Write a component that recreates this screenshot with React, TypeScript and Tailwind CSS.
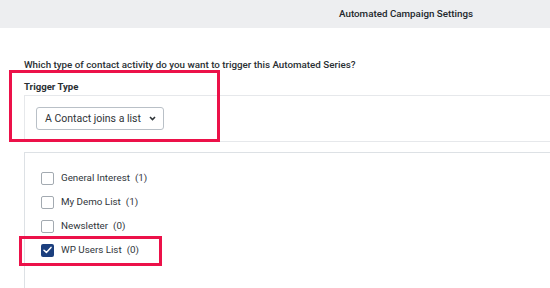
import { useState } from 'react';

interface ListItem {
  id: number;
  nome: string;
  total: number;
}

const listas: ListItem[] = [
  { id: 1, nome: 'General Interest', total: 1 },
  { id: 2, nome: 'My Demo List', total: 1 },
  { id: 3, nome: 'Newsletter', total: 0 },
  { id: 4, nome: 'WP Users List', total: 0 },
];

function Checkbox({ checked }: { checked: boolean }) {
  if (checked) {
    return (
      <span className="w-[13px] h-[13px] rounded-[2px] bg-[#1c3f7e] flex items-center justify-center shrink-0">
        <svg width="9" height="8" viewBox="0 0 9 8" fill="none">
          <path d="M1 4.2 L3.4 6.4 L8 1.4" stroke="white" strokeWidth="1.5" strokeLinecap="round" strokeLinejoin="round" />
        </svg>
      </span>
    );
  }
  return <span className="w-[13px] h-[13px] rounded-[2px] border-[1.5px] border-[#a3aab1] bg-white shrink-0" />;
}

export default function App() {
  const [selecionados] = useState<number[]>([4]);

  return (
    <div className="relative w-[550px] h-[288px] overflow-hidden bg-white text-[#333a40] font-['Roboto',sans-serif]">
      {/* cabeçalho */}
      <div className="h-[28px] bg-[#edeef0] flex items-center pl-[339px]">
        <span className="text-[9.8px] font-medium text-[#22272b]">Automated Campaign Settings</span>
      </div>

      <div className="pl-[24px]">
        <p className="mt-[30px] text-[9.8px] leading-[14px] font-medium text-[#2a2f33]">
          Which type of contact activity do you want to trigger this Automated Series?
        </p>
        <p className="mt-[8px] text-[9.6px] leading-[14px] font-bold text-[#2a2f33]">Trigger Type</p>

        <div className="mt-[1px] h-[47px] border-l border-y border-[#e6e8eb] pl-[11px] pt-[11px]">
          <div className="w-[128px] h-[23px] border border-[#b9c0c7] rounded-[3px] flex items-center justify-between pl-[8px] pr-[7px]">
            <span className="text-[10.5px] text-[#2f3438]">A Contact joins a list</span>
            <svg width="7" height="5" viewBox="0 0 7 5" fill="none">
              <path d="M1 1 L3.5 3.5 L6 1" stroke="#2f3438" strokeWidth="1.6" />
            </svg>
          </div>
        </div>

        <div className="mt-[10px] h-[200px] border-l border-t border-[#dde1e5] pl-[16px] pt-[13px]">
          {listas.map((l) => (
            <div key={l.id} className="h-[24px] flex items-center gap-[7px]">
              <Checkbox checked={selecionados.includes(l.id)} />
              <span className="text-[9.8px] text-[#30363b]">
                {l.nome}
                <span className="ml-[5px]">({l.total})</span>
              </span>
            </div>
          ))}
        </div>
      </div>

      {/* destaques */}
      <div className="absolute left-[9px] top-[70px] w-[211px] h-[72px] border-[3px] border-[#ec1149]" />
      <div className="absolute left-[19px] top-[236px] w-[143px] h-[30px] border-[3px] border-[#ec1149]" />
    </div>
  );
}
